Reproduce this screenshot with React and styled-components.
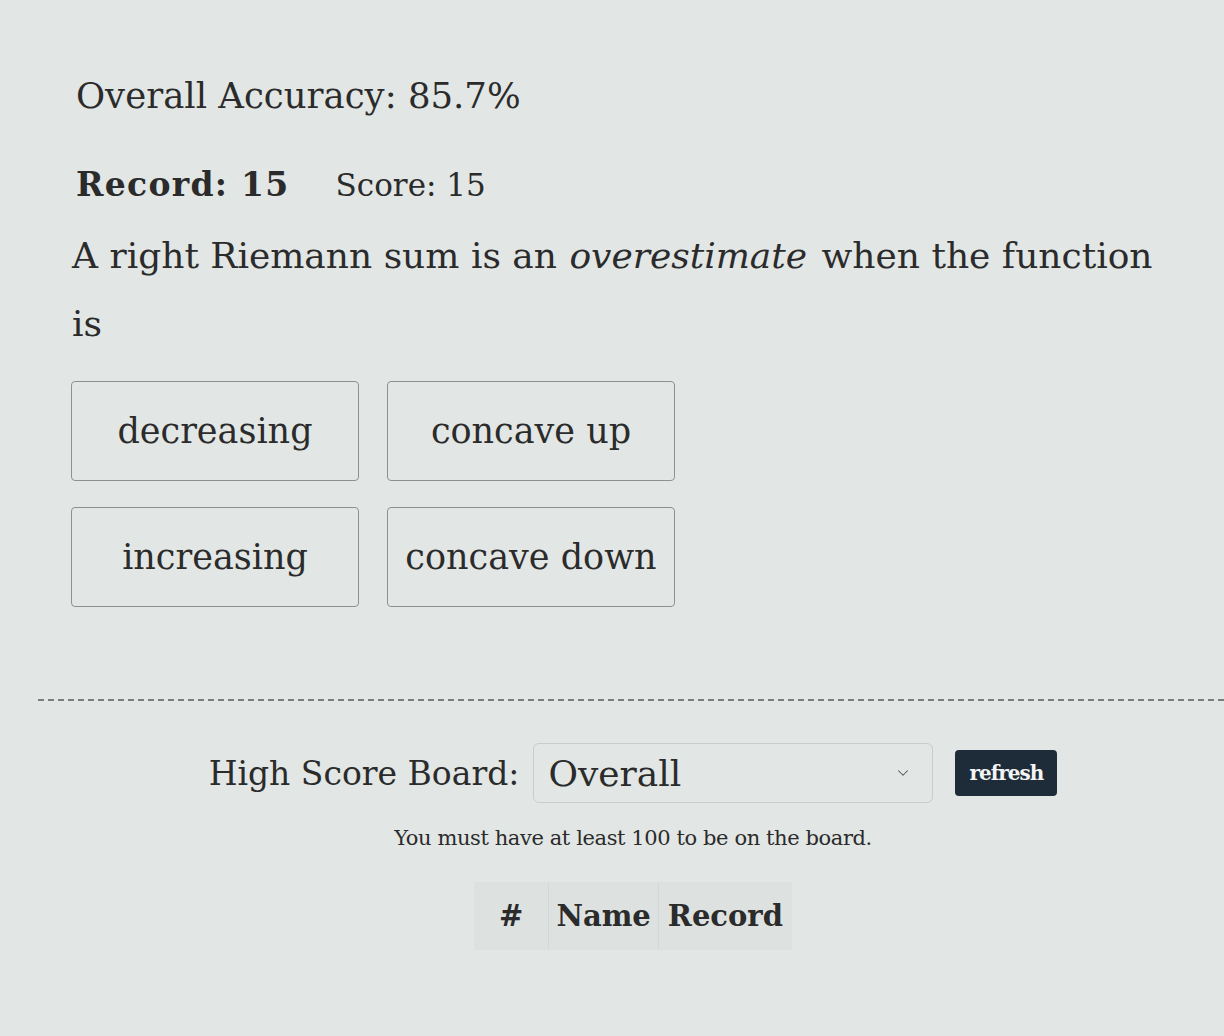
import React from "react";
import styled, { createGlobalStyle } from "styled-components";
import { ChevronDown } from "lucide-react";

const GlobalStyle = createGlobalStyle`
  html, body {
    margin: 0;
    padding: 0;
    background: #e2e6e5;
  }
  body {
    font-family: "DejaVu Serif", Georgia, serif;
    color: #2b2b2b;
  }
`;

const Page = styled.div`
  min-height: 1036px;
  padding-top: 74px;
  box-sizing: border-box;
  overflow: hidden;
`;

const Quiz = styled.section`
  padding-left: 76px;
`;

const Accuracy = styled.div`
  font-size: 35.5px;
  line-height: 44px;
`;

const Stats = styled.div`
  display: flex;
  align-items: baseline;
  gap: 46px;
  margin-top: 47px;
  font-size: 31px;
`;

const Record = styled.span`
  font-weight: 700;
  font-size: 33px;
  letter-spacing: 1.3px;
`;

const Question = styled.p`
  max-width: 1100px;
  margin: 18px 0 0 -4px;
  font-size: 36px;
  line-height: 68px;

  em {
    font-style: italic;
    padding: 0 3px 0 1px;
  }
`;

const Choices = styled.div`
  display: grid;
  grid-template-columns: repeat(2, 288px);
  gap: 26px 28px;
  margin-top: 23px;
  margin-left: -5px;
`;

const Choice = styled.button`
  height: 100px;
  border: 1.5px solid #8d9190;
  border-radius: 4px;
  background: transparent;
  font-family: inherit;
  font-size: 35px;
  color: #2b2b2b;
  cursor: pointer;
`;

const Divider = styled.hr`
  margin: 92px 0 0 38px;
  border: 0;
  border-top: 2px dashed #7a7e7d;
`;

const Board = styled.section`
  display: flex;
  flex-direction: column;
  align-items: center;
  padding-left: 42px;
`;

const BoardRow = styled.div`
  display: flex;
  align-items: center;
  margin-top: 42px;
`;

const BoardLabel = styled.label`
  font-size: 33px;
  margin-right: 14px;
`;

const Select = styled.div`
  display: flex;
  align-items: center;
  justify-content: space-between;
  width: 400px;
  height: 60px;
  box-sizing: border-box;
  padding: 0 20px 0 14px;
  border: 1.5px solid #c9cccb;
  border-radius: 6px;
  font-size: 36px;
`;

const Refresh = styled.button`
  margin-left: 22px;
  height: 46px;
  padding: 0 14px;
  border: 0;
  border-radius: 4px;
  background: #1e2b38;
  color: #f3f4f4;
  font-family: inherit;
  font-weight: 700;
  font-size: 20px;
  letter-spacing: -1px;
  cursor: pointer;
`;

const Note = styled.p`
  margin: 23px 0 0;
  font-size: 21px;
  letter-spacing: -0.4px;
`;

const Table = styled.table`
  margin-top: 32px;
  border-collapse: collapse;
  background: #dde2e1;
`;

const Th = styled.th`
  height: 68px;
  padding: 0 ${(p) => p.pad || 8}px;
  font-size: 29px;
  font-weight: 700;
  border-left: 1px solid #d3d8d7;
  &:first-child {
    border-left: 0;
  }
`;

export default function App() {
  return (
    <Page>
      <GlobalStyle />
      <Quiz>
        <Accuracy>Overall Accuracy: 85.7%</Accuracy>
        <Stats>
          <Record>Record: 15</Record>
          <span>Score: 15</span>
        </Stats>
        <Question>
          A right Riemann sum is an <em>overestimate</em> when the function is
        </Question>
        <Choices>
          <Choice>decreasing</Choice>
          <Choice>concave up</Choice>
          <Choice>increasing</Choice>
          <Choice>concave down</Choice>
        </Choices>
      </Quiz>
      <Divider />
      <Board>
        <BoardRow>
          <BoardLabel>High Score Board:</BoardLabel>
          <Select>
            <span>Overall</span>
            <ChevronDown size={18} strokeWidth={1.4} color="#555" />
          </Select>
          <Refresh>refresh</Refresh>
        </BoardRow>
        <Note>You must have at least 100 to be on the board.</Note>
        <Table>
          <thead>
            <tr>
              <Th pad={25}>#</Th>
              <Th pad={7}>Name</Th>
              <Th pad={9}>Record</Th>
            </tr>
          </thead>
        </Table>
      </Board>
    </Page>
  );
}
